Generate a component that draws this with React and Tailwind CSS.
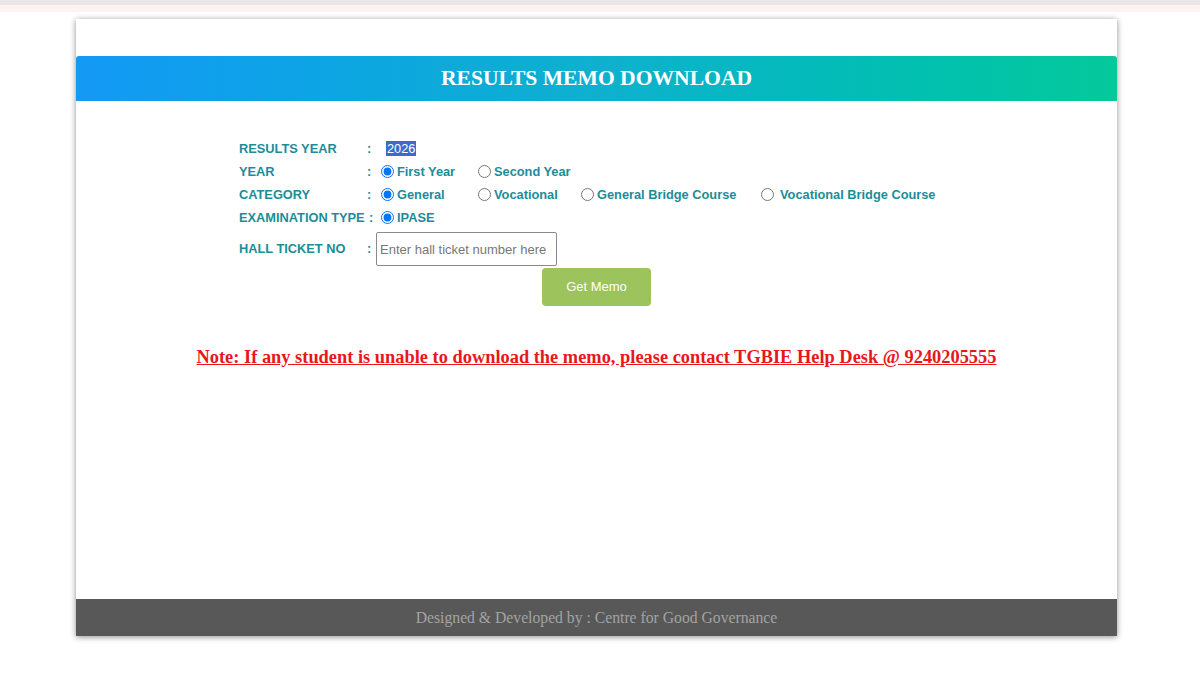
import { useState } from "react";

const teal = "text-[#1b8d98]";

function Radio({ name, label, checked, onChange, gap = "ml-[3px]" }) {
  return (
    <label className={`flex items-center font-bold ${teal}`}>
      <input
        type="radio"
        name={name}
        checked={checked}
        onChange={onChange}
        className="m-0 h-[13px] w-[13px]"
      />
      <span className={gap}>{label}</span>
    </label>
  );
}

function Row({ label, children, colon = "w-[14px]" }) {
  return (
    <div className="flex h-[23px] items-center">
      <div className={`w-[128px] shrink-0 whitespace-nowrap font-bold ${teal}`}>{label}</div>
      <div className={`${colon} shrink-0 font-bold ${teal}`}>:</div>
      <div className="flex items-center">{children}</div>
    </div>
  );
}

export default function App() {
  const [year, setYear] = useState("first");
  const [category, setCategory] = useState("general");
  const [ticket, setTicket] = useState("");

  return (
    <div className="min-h-[675px] bg-white font-['Liberation_Sans',Arial,sans-serif] text-[12.8px]">
      <div className="h-[5px] bg-[#e9e5e7]" />
      <div className="h-[7px] bg-[#fcf4f2]" />

      <div className="ml-[76px] mt-[7px] w-[1041px] bg-white shadow-[0_1px_6px_rgba(0,0,0,0.45)]">
        <div className="h-[37px]" />
        <div className="flex h-[45px] items-center justify-center rounded-t-[3px] bg-gradient-to-r from-[#1499f5] via-[#0fb0cf] to-[#05c99a]">
          <h1 className="font-['Liberation_Serif',serif] text-[21.6px] font-bold text-white">
            RESULTS MEMO DOWNLOAD
          </h1>
        </div>

        <div className="pl-[163px] pt-[36px]">
          <Row label="RESULTS YEAR">
            <span className="ml-[5px] bg-[#3a6cc8] px-[1px] leading-[15px] text-white">2026</span>
          </Row>
          <Row label="YEAR">
            <div className="w-[97px]">
              <Radio name="year" label="First Year" checked={year === "first"} onChange={() => setYear("first")} />
            </div>
            <Radio name="year" label="Second Year" checked={year === "second"} onChange={() => setYear("second")} />
          </Row>
          <Row label="CATEGORY">
            <div className="w-[97px]">
              <Radio name="cat" label="General" checked={category === "general"} onChange={() => setCategory("general")} />
            </div>
            <div className="w-[103px]">
              <Radio name="cat" label="Vocational" checked={category === "vocational"} onChange={() => setCategory("vocational")} />
            </div>
            <div className="w-[180px]">
              <Radio name="cat" label="General Bridge Course" checked={category === "gbc"} onChange={() => setCategory("gbc")} />
            </div>
            <Radio
              name="cat"
              label="Vocational Bridge Course"
              gap="ml-[6px]"
              checked={category === "vbc"}
              onChange={() => setCategory("vbc")}
            />
          </Row>
          <Row label="EXAMINATION TYPE" colon="w-[14px] pl-[2px]">
            <Radio name="exam" label="IPASE" checked onChange={() => {}} />
          </Row>
          <div className="mt-[3px] flex h-[34px] items-center">
            <div className={`w-[128px] shrink-0 font-bold ${teal}`}>HALL TICKET NO</div>
            <div className={`w-[9px] shrink-0 font-bold ${teal}`}>:</div>
            <input
              value={ticket}
              onChange={(e) => setTicket(e.target.value)}
              placeholder="Enter hall ticket number here"
              className="h-[34px] w-[181px] rounded-[2px] border border-[#8a8a8a] px-[3px] text-[13px] text-[#333] outline-none placeholder:text-[#777]"
            />
          </div>
        </div>

        <div className="mt-[2px] flex justify-center">
          <button
            type="button"
            className="h-[38px] w-[109px] rounded-[4px] bg-[#9dc35d] text-[13px] text-white"
          >
            Get Memo
          </button>
        </div>

        <p className="mt-[39px] text-center font-['Liberation_Serif',serif] text-[18.4px] font-bold leading-[24px] text-[#e8171b] underline">
          Note: If any student is unable to download the memo, please contact TGBIE Help Desk @ 9240205555
        </p>

        <div className="h-[230px]" />

        <footer className="flex h-[37px] items-center justify-center bg-[#585858] font-['Liberation_Serif',serif] text-[15.7px] text-[#a3a3a3]">
          Designed &amp; Developed by : Centre for Good Governance
        </footer>
      </div>
    </div>
  );
}
